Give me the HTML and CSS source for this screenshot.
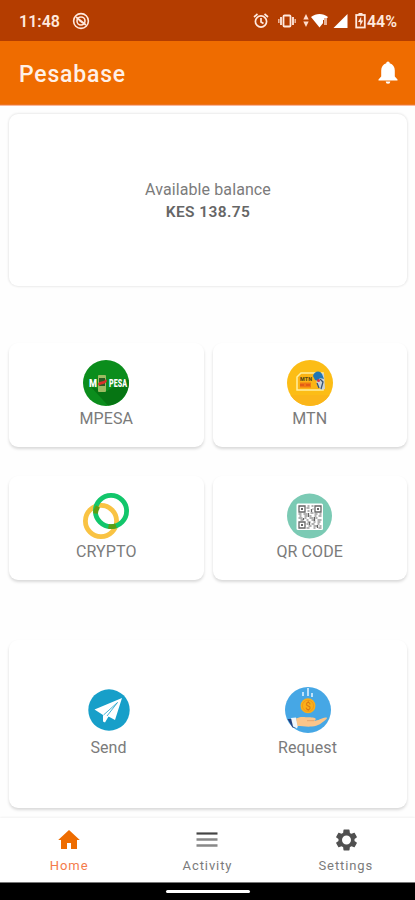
FILE: index.html
```
<!DOCTYPE html>
<html lang="en">
<head>
  <meta charset="UTF-8">
  <meta name="viewport" content="width=device-width, initial-scale=1.0">
  <title>Pesabase</title>
  <link rel="stylesheet" href="styles.css">
</head>
<body>
  <!-- Status bar -->
  <div class="status-bar">
    <span class="clock">11:48</span>
    <svg class="status-app" width="18" height="18" viewBox="0 0 18 18" fill="none" stroke="#ffe9de">
      <circle cx="9" cy="9" r="7.4" stroke-width="1.6"/>
      <circle cx="9" cy="9" r="4" stroke-width="1.6"/>
      <path d="M4 5l10 8M7 8l4 3" stroke-width="1.7"/>
    </svg>
    <div class="status-icons">
      <svg width="16" height="18" viewBox="0 0 16 18" fill="none" stroke="#ffe9de" stroke-width="1.7">
        <circle cx="8" cy="9.5" r="5.6"/>
        <path d="M8 6v4l2.5 1.5M1 5l3.5-3M15 5l-3.5-3"/>
      </svg>
      <svg class="vibrate" width="18" height="18" viewBox="0 0 18 18">
        <rect x="5.5" y="3.5" width="7" height="11" rx="1" fill="none" stroke="#ffe9de" stroke-width="1.8"/>
        <path d="M3 5v8M15 5v8" stroke="#ffe9de" stroke-width="1.8"/>
        <path d="M.8 7v4M17.2 7v4" stroke="#efb9a0" stroke-width="1.5"/>
      </svg>
      <svg class="wifi" width="26" height="18" viewBox="0 0 26 18" fill="#fff">
        <path d="M3 2l2.7 5.5H.3zM3 15L.3 9.5h5.4z" fill="#ffdccb"/>
        <path d="M8 5c5-4 12-4 17 0L16.5 15.5z"/>
        <path d="M20 8h5v6h-5z" fill="#b43d00"/>
        <path d="M21 6h3v7h-3z" fill="#e8b197"/>
      </svg>
      <svg class="signal" width="15" height="18" viewBox="0 0 15 18" fill="#fff">
        <path d="M14.5 2v14H.5z"/>
      </svg>
      <svg class="battery" width="11" height="18" viewBox="0 0 11 18">
        <path d="M3.5 1h4v2h-4z" fill="#ffe9de"/>
        <rect x="1.2" y="3" width="8.6" height="12.5" fill="none" stroke="#ffe9de" stroke-width="1.8"/>
        <path d="M6.2 4.500L3 10h2.200v4l3-5.500H6.200z" fill="#ffe9de"/>
      </svg>
      <span class="percent">44%</span>
    </div>
  </div>

  <header class="app-bar">
    <h1>Pesabase</h1>
    <svg width="20" height="24" viewBox="0 0 20 24" fill="#fff">
      <path d="M10 .5c1 0 1.700.7 1.700 1.800C15 3.200 16.800 6 16.800 9.500v6L19.500 18.500v1H.5v-1l2.700-3v-6C3.200 6 5 3.200 8.300 2.300 8.300 1.200 9 .5 10 .5z"/>
      <path d="M7.700 20.500h4.600a2.300 2.300 0 0 1-4.600 0z"/>
    </svg>
  </header>

  <main>
    <section class="card balance">
      <p>Available balance</p>
      <strong>KES 138.75</strong>
    </section>

    <!-- Wallets -->
    <section class="wallets">
      <div class="card wallet">
        <svg width="46" height="46" viewBox="0 0 46 46">
          <circle cx="23" cy="23" r="23" fill="#0b8d1c"/>
          <path d="M8 27l17 18.500A23 23 0 0 0 45.700 20L43 19 24 31z" fill="#067513"/>
          <rect x="15" y="15" width="8" height="17" rx="1" fill="#9dbb62"/>
          <rect x="16" y="18" width="6" height="8" fill="#285c25"/>
          <path d="M15 24c2-4 5-1 8-5l1 2c-2 4-5 2-8 5z" fill="#d8302a"/>
          <g class="mpesa-text">
            <text x="6" y="26.800" textLength="8" lengthAdjust="spacingAndGlyphs">M</text>
            <text x="26" y="26.800" textLength="18" lengthAdjust="spacingAndGlyphs">PESA</text>
          </g>
        </svg>
        <span>MPESA</span>
      </div>
      <div class="card wallet">
        <svg width="46" height="46" viewBox="0 0 46 46">
          <circle cx="23" cy="23" r="23" fill="#fcbd16"/>
          <path d="M3.500 35h39a23 23 0 0 1-39 0z" fill="#fbb61a"/>
          <path d="M10 17l4-4H36V30H10z" fill="#fcb414" stroke="#fff0a0" stroke-width="1.500"/>
          <text class="mtn-text" x="13" y="20.500" textLength="12" lengthAdjust="spacingAndGlyphs">MTN</text>
          <path d="M13 22.500h11v5H13z" fill="#f07913"/>
          <path d="M13 25h4m2 0h4" stroke="#d4421b"/>
          <path d="M29 16l8-3 1 16-4 1-4-5z" fill="#c9d3da"/>
          <path d="M26 16c1-5 7-6 9-2l2 5-4-1-2 3-3-1z" fill="#2076b5"/>
          <path d="M33 19l3 3-2 7M30 23l2 5" fill="none" stroke="#3b5370" stroke-width="1.300"/>
          <circle cx="31.500" cy="20.500" r="1.500" fill="#dc3545"/>
        </svg>
        <span>MTN</span>
      </div>
      <div class="card wallet">
        <svg width="46" height="46" viewBox="0 0 46 46" fill="none" stroke-width="4.800">
          <circle cx="18" cy="28" r="15.600" stroke="#f9c343"/>
          <circle cx="28" cy="18" r="15.600" stroke="#12c66b"/>
          <path d="M12.500 20.500a15.600 15.600 0 0 1 2.500-7M25.500 33.400a15.600 15.600 0 0 0 7.500-.6" stroke="#5c9e12"/>
        </svg>
        <span>CRYPTO</span>
      </div>
      <div class="card wallet">
        <svg width="46" height="46" viewBox="0 0 46 46">
          <circle cx="22.500" cy="23" r="22.500" fill="#7bcab4"/>
          <rect x="9.500" y="10.500" width="26.500" height="26.500" rx="1.500" fill="#fff"/>
          <g fill="none" stroke="#666" transform="translate(-.5 0)">
            <path d="M12.500 13h6v6h-6zM28.500 13h6v6h-6zM12.500 29h6v6h-6z" stroke-width="1.300"/>
            <path d="M14.500 16h2m14 0h2m-18 16h2" stroke-width="2"/>
            <path d="M21 13h2m2 0h2M20 15h3m3 1h1M21 18h2m1 2h3M12 21h3m2 0h4m7 0h3m2 0h2M13 23h2m3 0h3m2 0h2m3 0h2m2 0h3M12 25h4m2 0h2m3 0h4m2 0h2M14 27h3m3 0h2m3 0h3m3 0h4M21 29h3m3 0h2m2 0h3M20 31h2m3 0h3m3 0h2M22 33h3m2 0h4m2 0h2M20 35h3m4 0h2m3 0h3" stroke-width="1.200"/>
            <path d="M22 20v4m3-8v3m3 5v4m-5 1v3m8 0v3m-14-10v2" stroke-width="1.300"/>
          </g>
        </svg>
        <span>QR CODE</span>
      </div>
    </section>

    <!-- Send / request money -->
    <section class="card actions">
      <div class="action">
        <svg width="46" height="46" viewBox="0 0 46 46">
          <circle cx="23" cy="23" r="20.700" fill="#179fc9"/>
          <path d="M8.500 22.500L36 11 29 33 22.500 29.500 19 35.500 17 34.500 17 28z" fill="#fff"/>
          <path d="M17.500 28L31.500 15.500 21 29" fill="none" stroke="#179fc9" stroke-width=".8"/>
        </svg>
        <span>Send</span>
      </div>
      <div class="action">
        <svg width="46" height="46" viewBox="0 0 46 46">
          <circle cx="23" cy="23" r="23" fill="#46a7e5"/>
          <path d="M18 5v4M23 1v8M27 6v4" stroke="#e6f5ff" stroke-width="1.500"/>
          <circle cx="23" cy="18.800" r="7.500" fill="#faaf1b"/>
          <circle cx="23" cy="18.800" r="5.600" fill="none" stroke="#f39a16"/>
          <text class="coin-text" x="23" y="22.500">$</text>
          <path d="M2.500 32l5 8.500 4 .5-4-9z" fill="#23417e"/>
          <path d="M6 31l5-.5 2 8-1 3-4-2z" fill="#eef6fc"/>
          <path d="M11 31.500c3-1.500 6-2 10-1.200 4 .2 8-.3 9.500 1.300.8 1-.5 2-2 2.200 5 0 8-2.800 12-3.300 1.500-.2 2 .5 1 1.400C37 36 33 39 27 39.500c-6 .5-10-.5-14.500-.5z" fill="#fbc58a"/>
          <path d="M22 33.700h7" stroke="#e7a46b"/>
        </svg>
        <span>Request</span>
      </div>
    </section>
  </main>

  <nav class="bottom-nav">
    <a class="nav-item active">
      <svg width="24" height="24" viewBox="0 0 24 24" fill="#ee6c00">
        <path d="M10 21v-6h4v6h6v-9h2.800L12 2 1.200 12H4v9z"/>
      </svg>
      <span>Home</span>
    </a>
    <a class="nav-item">
      <svg width="24" height="24" viewBox="0 0 24 24">
        <path d="M1.500 5.500h21" stroke="#444" stroke-width="2.200"/>
        <path d="M1.500 11.500h21M1.500 17.500h21" stroke="#888" stroke-width="2.400"/>
      </svg>
      <span>Activity</span>
    </a>
    <a class="nav-item">
      <svg width="24" height="24" viewBox="0 0 24 24" fill="#505050">
        <path fill-rule="evenodd" d="M20.500 12.900a8 8 0 0 0 0-1.800l2.200-1.700c.2-.2.300-.5.100-.7l-2.100-3.700c-.1-.2-.4-.3-.6-.2l-2.600 1a8 8 0 0 0-1.600-.9L15.500 2c0-.2-.2-.4-.5-.4H10c-.3 0-.5.2-.5.400L9.100 4.900c-.6.2-1.100.5-1.600.9l-2.600-1c-.2-.1-.5 0-.6.2L2.200 8.700c-.2.200-.1.500.1.700l2.200 1.700a8 8 0 0 0 0 1.800l-2.200 1.700c-.2.200-.3.500-.1.700L4.300 19c.1.200.4.300.6.200l2.600-1c.5.400 1 .7 1.600.9l.4 2.900c0 .2.200.4.500.4h5c.3 0 .5-.2.500-.4l.4-2.900c.6-.2 1.100-.5 1.600-.9l2.600 1c.2.100.5 0 .6-.2l2.100-3.700c.2-.2.100-.5-.1-.7zM12.500 7.500a4.500 4.500 0 1 1 0 9 4.500 4.500 0 0 1 0-9z"/>
      </svg>
      <span>Settings</span>
    </a>
  </nav>
  <div class="gesture-bar"><i></i></div>
</body>
</html>
```
FILE: styles.css
```
* {
  box-sizing: border-box;
}
body {
  margin: 0;
  height: 900px;
  display: flex;
  flex-direction: column;
  overflow: hidden;
  background: #fefefe;
  color: #7b7b7b;
  font-family: Roboto, sans-serif;
}
svg {
  display: block;
  flex-shrink: 0;
  overflow: visible;
}
.status-bar {
  height: 41px;
  padding: 0 18px 0 19px;
  display: flex;
  align-items: center;
  background: #b43d00;
  color: #ffe9de;
  font-size: 16px;
  font-weight: 500;
}
.clock {
  width: 41px;
  padding-top: 1px;
  font-weight: 600;
  white-space: nowrap;
}
.status-app {
  margin-left: 12px;
}
.status-icons {
  margin-left: auto;
  display: flex;
  align-items: center;
}
.vibrate {
  margin-left: 9px;
}
.wifi {
  margin-left: 7px;
}
.signal {
  margin-left: 4px;
}
.battery {
  margin: 0 1px 0 7px;
}
.percent {
  padding-top: 1px;
  font-weight: 600;
}
.app-bar {
  height: 64px;
  padding: 0 17px 0 19px;
  display: flex;
  align-items: center;
  justify-content: space-between;
  background: #ef6c00;
  border-bottom: 1px solid #ed7420;
}
.app-bar h1 {
  margin: 3px 0 0;
  color: #fff0e6;
  font-size: 23px;
  font-weight: 500;
  letter-spacing: 0.8px;
}
main {
  height: 713px;
  padding: 8px 8px 0 9px;
  border-top: 1px solid #f9b79a;
}
.card {
  background: #fff;
  border-radius: 9px;
  box-shadow: 0 2px 3px rgba(0, 0, 0, 0.15);
}
.balance {
  height: 172px;
  padding-top: 65px;
  text-align: center;
  font-size: 16px;
  line-height: 22px;
  letter-spacing: 0.1px;
  box-shadow: 0 0 2px 1px rgba(0, 0, 0, 0.08);
}
.balance p {
  margin: 0;
}
.balance strong {
  color: #666;
  font-size: 15.5px;
  font-weight: 600;
  letter-spacing: 0.4px;
}
.wallets {
  margin-top: 57px;
  display: grid;
  grid-template-columns: 1fr 1fr;
  gap: 29px 9px;
}
.wallet {
  height: 104px;
  padding-top: 17px;
  display: flex;
  flex-direction: column;
  align-items: center;
  gap: 1px;
  font-size: 16px;
  line-height: 24px;
  letter-spacing: 0.1px;
}
.actions {
  height: 168px;
  margin-top: 60px;
  padding-top: 47px;
  display: flex;
}
.action {
  flex: 1;
  display: flex;
  flex-direction: column;
  align-items: center;
  gap: 3px;
  font-size: 16px;
  line-height: 24px;
  letter-spacing: 0.1px;
}
.mpesa-text {
  fill: #fff;
  font-size: 11.5px;
  font-weight: 900;
}
.mtn-text {
  fill: #584918;
  font-size: 6px;
  font-weight: 900;
}
.coin-text {
  fill: #d87512;
  font-size: 10px;
  text-anchor: middle;
}
.bottom-nav {
  height: 64px;
  padding-top: 10px;
  display: flex;
  background: #fff;
  box-shadow: 0 -1px 2px rgba(0, 0, 0, 0.05);
}
.nav-item {
  flex: 1;
  display: flex;
  flex-direction: column;
  align-items: center;
  gap: 5px;
  font-size: 13px;
  line-height: 18px;
  letter-spacing: 0.9px;
}
.active {
  color: #f47b4b;
}
.gesture-bar {
  height: 18px;
  display: flex;
  align-items: center;
  justify-content: center;
  background: #000;
  border-top: 1px solid #777;
}
.gesture-bar i {
  width: 84px;
  height: 3px;
  background: #fff;
  border-radius: 2px;
}
```
